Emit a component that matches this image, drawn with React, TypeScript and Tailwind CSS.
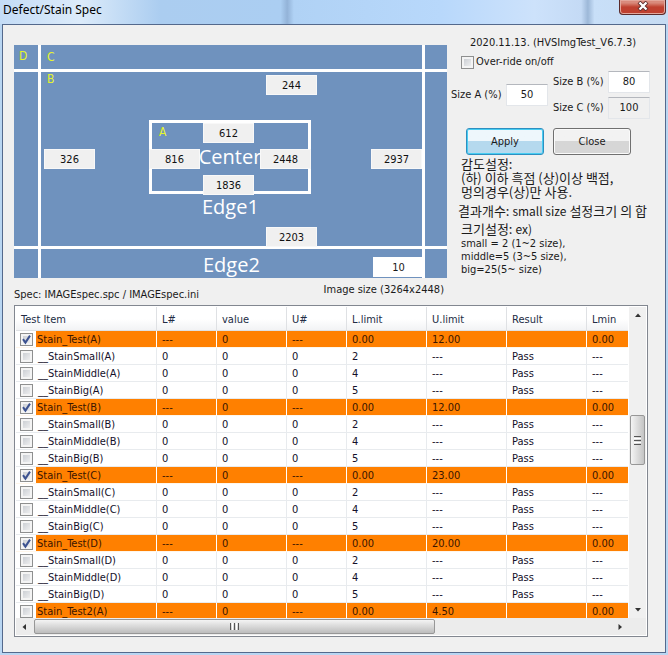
import React from 'react';

const sans = 'font-["DejaVu_Sans_Condensed","Noto_Sans_CJK_KR",sans-serif]';
const korean = 'font-["Noto_Sans_CJK_KR",sans-serif]';

type Row = { name: string; head?: boolean; on?: boolean; l?: string; u?: string };

const rows: Row[] = [
  { name: 'Stain_Test(A)', head: true, on: true, l: '0.00', u: '12.00' },
  { name: '__StainSmall(A)', l: '2' },
  { name: '__StainMiddle(A)', l: '4' },
  { name: '__StainBig(A)', l: '5' },
  { name: 'Stain_Test(B)', head: true, on: true, l: '0.00', u: '12.00' },
  { name: '__StainSmall(B)', l: '2' },
  { name: '__StainMiddle(B)', l: '4' },
  { name: '__StainBig(B)', l: '5' },
  { name: 'Stain_Test(C)', head: true, on: true, l: '0.00', u: '23.00' },
  { name: '__StainSmall(C)', l: '2' },
  { name: '__StainMiddle(C)', l: '4' },
  { name: '__StainBig(C)', l: '5' },
  { name: 'Stain_Test(D)', head: true, on: true, l: '0.00', u: '20.00' },
  { name: '__StainSmall(D)', l: '2' },
  { name: '__StainMiddle(D)', l: '4' },
  { name: '__StainBig(D)', l: '5' },
  { name: 'Stain_Test2(A)', head: true, l: '0.00', u: '4.50' },
];

const columns = ['Test Item', 'L#', 'value', 'U#', 'L.limit', 'U.limit', 'Result', 'Lmin'];

function Tick({ id, on }: { id: string; on?: boolean }) {
  return (
    <span className="relative block h-[13px] w-[13px] shrink-0">
      <input
        id={id}
        type="checkbox"
        defaultChecked={on}
        className="peer block h-[13px] w-[13px] appearance-none border border-[#8e8f8f] bg-linear-to-br from-[#c3c7cd] to-[#f6f6f6] shadow-[inset_0_0_0_2px_#f4f4f4]"
      />
      <svg viewBox="0 0 13 13" className="pointer-events-none absolute inset-0 hidden h-[13px] w-[13px] peer-checked:block">
        <path d="M3 6.2 L5.4 9.6 L10 2.6" fill="none" stroke="#3c5290" strokeWidth="2" />
      </svg>
    </span>
  );
}

function Value({ label, value, place }: { label: string; value: string; place: string }) {
  return (
    <input
      aria-label={label}
      readOnly
      defaultValue={value}
      className={`absolute h-5 w-[51px] border border-[#f8f8f8] bg-[#f0f0f0] text-center text-[#111] outline-none ${place}`}
    />
  );
}

function SizeField({ id, label, value, disabled }: { id: string; label: string; value: string; disabled?: boolean }) {
  return (
    <div className="flex items-center">
      <label htmlFor={id} className="w-[55px] whitespace-nowrap">{label}</label>
      <input
        id={id}
        defaultValue={value}
        readOnly={disabled}
        className={`h-[22px] w-[42px] border border-[#e3e6ea] border-t-[#b4b7bd] pb-[2px] text-center outline-none ${disabled ? 'bg-[#f0f0f0]' : 'bg-white'}`}
      />
    </div>
  );
}

function Diagram() {
  const cell = 'bg-[#6f92be]';
  const letter = 'text-[12px] leading-[15px] text-[#e6f52c]';
  const zone = 'font-["Open_Sans","Noto_Sans",sans-serif] text-[20px] leading-6 text-white';
  return (
    <div className="relative grid h-[233px] grid-cols-[24px_1fr_22px] grid-rows-[24px_1fr_29px] gap-[3px] bg-white">
      <div className={`${cell} ${letter} pt-1 pl-[5px]`}>D</div>
      <div className={`${cell} ${letter} pt-[5px] pl-[6px]`}>C</div>
      <div className={cell} />
      <div className={cell} />
      <div className={`${cell} relative`}>
        <div className={`${letter} pl-[6px]`}>B</div>
        <div className={`${zone} absolute top-12 left-[108px] flex h-[74px] w-[162px] items-center justify-center border-[3px] border-white`}>
          <span className='absolute top-[2px] left-[7px] font-["DejaVu_Sans_Condensed",sans-serif] text-[12px] leading-[15px] text-[#e6f52c]'>A</span>
          Center
        </div>
        <div className={`${zone} absolute top-[123px] left-[161px]`}>Edge1</div>
        <Value label="B top" value="244" place="left-[225px] top-[3px]" />
        <Value label="A top" value="612" place="left-[162px] top-[51px]" />
        <Value label="B left" value="326" place="left-[3px] top-[77px]" />
        <Value label="A left" value="816" place="left-[108px] top-[77px]" />
        <Value label="A right" value="2448" place="left-[219px] top-[77px]" />
        <Value label="B right" value="2937" place="left-[330px] top-[77px]" />
        <Value label="A bottom" value="1836" place="left-[162px] top-[103px]" />
        <Value label="B bottom" value="2203" place="left-[225px] top-[155px]" />
      </div>
      <div className={cell} />
      <div className={cell} />
      <div className={`${cell} ${zone} pt-1 pl-[162px]`}>Edge2</div>
      <div className={cell} />
      <input
        aria-label="Margin"
        defaultValue="10"
        className="absolute right-[23px] bottom-[1px] h-5 w-[51px] bg-white text-center outline-none"
      />
    </div>
  );
}

function Controls() {
  const btn = 'h-[27px] w-[78px] rounded-[3px] border text-center';
  return (
    <div className="ml-1 min-w-[200px] flex-1 whitespace-nowrap">
      <p className="pl-[19px]">2020.11.13. (HVSImgTest_V6.7.3)</p>
      <div className="mt-[5px] flex items-center gap-[2px] pl-[10px]">
        <Tick id="override" />
        <label htmlFor="override">Over-ride on/off</label>
      </div>
      <div className="mt-[2px] flex items-center gap-[5px]">
        <SizeField id="sizeA" label="Size A (%)" value="50" />
        <div className="flex flex-col gap-1">
          <SizeField id="sizeB" label="Size B (%)" value="80" />
          <SizeField id="sizeC" label="Size C (%)" value="100" disabled />
        </div>
      </div>
      <div className="mt-[9px] flex gap-[9px] pl-[15px]">
        <button className={`${btn} border-[#2e8fc0] bg-linear-to-b from-[#eef7fc] from-50% to-[#b5d9ee] to-50% shadow-[inset_0_0_0_1px_#48cdf2]`}>Apply</button>
        <button className={`${btn} border-[#707070] bg-linear-to-b from-[#f2f2f2] from-50% to-[#d6d6d6] to-50% shadow-[inset_0_0_0_1px_#fafafa]`}>Close</button>
      </div>
      <div className={`${korean} mt-[2px] pl-[10px] text-[13px] leading-[14px]`}>
        <p>감도설정:</p>
        <p>(하) 이하 흑점 (상)이상 백점,</p>
        <p>멍의경우(상)만 사용.</p>
      </div>
      <p className={`${korean} mt-[5px] pl-[7px] text-[13px] leading-[14px]`}>
        결과개수: <span className="text-[12px]">small size</span> 설정크기 의 합
      </p>
      <div className="mt-1 pl-[10px] leading-[13px]">
        <p className={`${korean} mb-px text-[13px] leading-[14px]`}>크기설정: <span className="text-[12px]">ex)</span></p>
        <p>small = 2 (1~2 size),</p>
        <p>middle=5 (3~5 size),</p>
        <p>big=25(5~ size)</p>
      </div>
    </div>
  );
}

function Arrow({ d }: { d: string }) {
  return (
    <svg viewBox="0 0 8 8" className="h-2 w-2 shrink-0"><path d={d} fill="#333" /></svg>
  );
}

function SpecTable() {
  return (
    <div className="border border-[#828790] bg-white p-px">
      <div className="flex h-[311px]">
        <div className="min-w-0 flex-1 overflow-hidden">
          <table className="w-full table-fixed border-separate border-spacing-0 text-left">
            <colgroup>
              <col className="w-[141px]" />
              <col className="w-[60px]" />
              <col className="w-[70px]" />
              <col className="w-[60px]" />
              <col className="w-20" />
              <col className="w-20" />
              <col className="w-20" />
              <col />
            </colgroup>
            <thead>
              <tr className="h-6 bg-linear-to-b from-white from-50% to-[#f1f2f4]">
                {columns.map((c) => (
                  <th key={c} className="border-r border-b border-[#dfe1e4] px-[5px] pt-[2px] pb-0 font-normal text-[#222c44] last:border-r-0">{c}</th>
                ))}
              </tr>
            </thead>
            <tbody>
              {rows.map((r) => {
                const td = `border-r border-b p-0 pt-[2px] pl-[5px] last:border-r-0 ${r.head ? 'border-r-white border-b-[#fff6ea] bg-[#ff8000] text-[#3a1500]' : 'border-[#e8ebee] text-[#14102a]'}`;
                const n = r.head ? '---' : '0';
                return (
                  <tr key={r.name} className="h-[17px]">
                    <td className={`border-r border-b p-0 ${r.head ? 'border-r-white border-b-[#fff6ea]' : 'border-[#e8ebee]'}`}>
                      <div className="flex h-4 items-center gap-[3px] pl-1">
                        <Tick id={r.name} on={r.on} />
                        <label
                          htmlFor={r.name}
                          className={`h-4 flex-1 pt-[2px] ${r.head ? 'bg-[#ff8000] pl-[1px] text-[#3a1500]' : 'pl-[2px] text-[#14102a]'}`}
                        >
                          {r.name}
                        </label>
                      </div>
                    </td>
                    <td className={td}>{n}</td>
                    <td className={td}>0</td>
                    <td className={td}>{n}</td>
                    <td className={td}>{r.l}</td>
                    <td className={td}>{r.head ? r.u : '---'}</td>
                    <td className={td}>{r.head ? '' : 'Pass'}</td>
                    <td className={td}>{r.head ? '0.00' : '---'}</td>
                  </tr>
                );
              })}
            </tbody>
          </table>
        </div>
        <div className="ml-px flex w-[17px] flex-col items-center bg-[#f0f0f0] py-1">
          <Arrow d="M1 6 L4 2.5 L7 6 Z" />
          <div className="flex-[96]" />
          <div className="flex h-[50px] w-[15px] flex-col items-center justify-center gap-px rounded-[2px] border border-[#979797] bg-linear-to-r from-[#f4f4f4] to-[#c4c4c4]">
            <i className="h-px w-[7px] bg-[#555]" />
            <i className="h-px w-[7px] bg-white" />
            <i className="h-px w-[7px] bg-[#555]" />
            <i className="h-px w-[7px] bg-white" />
            <i className="h-px w-[7px] bg-[#555]" />
          </div>
          <div className="flex-[141]" />
          <Arrow d="M1 2 L4 5.5 L7 2 Z" />
        </div>
      </div>
      <div className="flex h-[17px] items-center bg-[#ececec] pr-[22px] pl-1">
        <Arrow d="M6 1 L2.5 4 L6 7 Z" />
        <div className="ml-[6px] flex h-[15px] flex-[400] items-center justify-center gap-px rounded-[2px] border border-[#979797] bg-linear-to-b from-[#f4f4f4] to-[#bdbdbd]">
          <i className="h-[7px] w-px bg-[#555]" />
          <i className="h-[7px] w-px bg-white" />
          <i className="h-[7px] w-px bg-[#555]" />
          <i className="h-[7px] w-px bg-white" />
          <i className="h-[7px] w-px bg-[#555]" />
        </div>
        <div className="flex-[181]" />
        <Arrow d="M2.5 1 L6 4 L2.5 7 Z" />
      </div>
    </div>
  );
}

export default function App() {
  return (
    <div className={`${sans} w-full bg-[#b9d6f2] px-[2px] pb-[2px] text-[11px] leading-[14px] text-[#1a1a1a]`}>
      <header className="-mx-[2px] flex h-6 items-start justify-between bg-[linear-gradient(90deg,#c4dcf6_0%,#dcebfa_12%,#abcdf0_24%,#abcef2_42%,#93b3d8_43%,#b0d2f5_44%,#b8d8fb_66%,#cde2fb_80%,#c4daf5_87%,#9db8d8_88%,#c8dff8_89%,#c6dbf2_100%)] pr-[2px] pl-[3px]">
        <h1 className='pt-[2px] font-["Noto_Sans",sans-serif] text-[12px] leading-4 text-black'>Defect/Stain Spec</h1>
        <button
          aria-label="Close window"
          className="flex h-[15px] w-[47px] items-center justify-center rounded-b-[4px] border border-t-0 border-[#5a2a2a] bg-linear-to-b from-[#d98a7c] from-20% to-[#bf4030] to-50% pb-[3px] shadow-[inset_0_0_0_1px_#e3a79c]"
        >
          <svg viewBox="0 0 12 10" className="h-[10px] w-3">
            <path d="M2 1 L10 9 M10 1 L2 9" stroke="#5b2b2b" strokeWidth="4" />
            <path d="M2.5 1.5 L9.5 8.5 M9.5 1.5 L2.5 8.5" stroke="#fff" strokeWidth="2.4" />
          </svg>
        </button>
      </header>
      <main className="border border-[#54698c] bg-[#f0f0f0] pt-[11px] pr-[17px] pb-[15px] pl-[11px]">
        <div className="flex">
          <div className="w-[433px] shrink-0 pt-[9px]">
            <Diagram />
            <div className="flex h-[27px] items-start justify-between pr-[3px]">
              <p className="pt-[10px]">Spec: IMAGEspec.spc / IMAGEspec.ini</p>
              <p className="pt-[5px]">Image size (3264x2448)</p>
            </div>
          </div>
          <Controls />
        </div>
        <SpecTable />
      </main>
    </div>
  );
}
